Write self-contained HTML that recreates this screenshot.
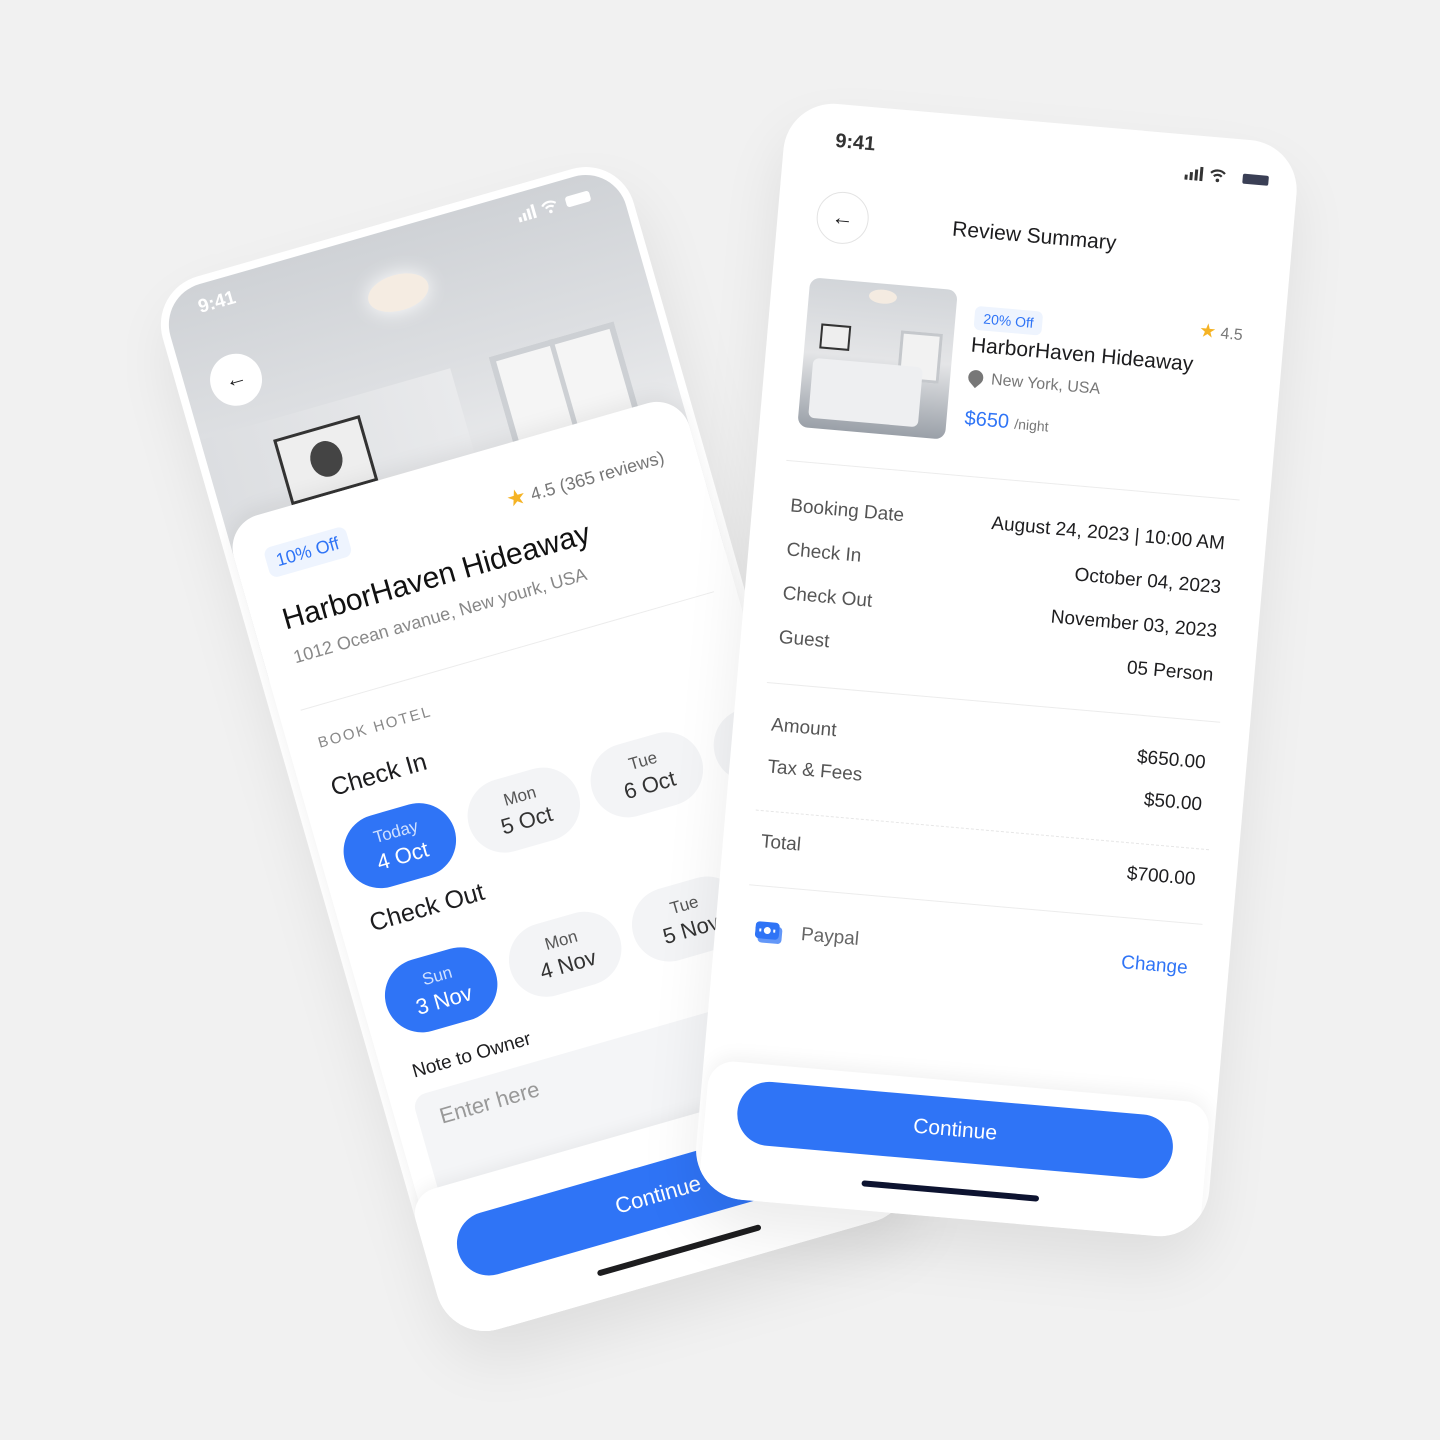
<!DOCTYPE html>
<html><head><meta charset="utf-8"><style>
*{margin:0;padding:0;box-sizing:border-box}
body{width:1440px;height:1440px;background:#f1f1f1;position:relative;overflow:hidden;font-family:"Liberation Sans",sans-serif;color:#1d1d1f}
.ph{position:absolute;background:#fff;border-radius:50px;box-shadow:0 30px 60px rgba(0,0,0,.08)}
.a{position:absolute;white-space:nowrap}
#L{left:287px;top:202px;width:490px;height:1095px;transform-origin:245px 535px;transform:rotate(-16deg);overflow:hidden}
#R{left:740px;top:120px;width:515px;height:1100px;transform-origin:257px 537px;transform:rotate(5deg);overflow:hidden}
.pill{position:absolute;width:114px;height:74px;border-radius:37px;background:#f3f4f6;text-align:center;color:#333}
.pill .d{font-size:17px;color:#555;margin-top:13px}
.pill .n{font-size:22px;margin-top:2px}
.pill.on{background:#2f74f6;color:#fff}
.pill.on .d{color:#cfe0ff}
.lab{font-size:19px;color:#555}
.val{font-size:19px;color:#1d1d1f;text-align:right;right:41px}
.hr{position:absolute;left:30px;right:30px;height:1px;background:#ececec}
</style></head><body>

<div class="ph" id="L">
  <div class="a" style="left:8px;top:8px;right:8px;height:400px;border-radius:42px 42px 0 0;background:linear-gradient(180deg,#cfd2d6 0,#dcdee1 35%,#e8e9eb 60%,#d8dadd 100%);overflow:hidden">
    <div class="a" style="left:0;top:150px;width:260px;height:250px;background:linear-gradient(90deg,#dcdee1,#e9eaec)"></div>
    <div class="a" style="left:200px;top:45px;width:62px;height:36px;border-radius:50%;background:#f5ece2;box-shadow:0 0 20px #fff"></div>
    <div class="a" style="left:300px;top:150px;width:130px;height:170px;background:#f5f5f5;border:6px solid #cdd0d4"></div>
    <div class="a" style="left:362px;top:150px;width:5px;height:170px;background:#cdd0d4"></div>
    <div class="a" style="left:70px;top:170px;width:90px;height:68px;background:#eee;border:3px solid #333"></div>
    <div class="a" style="left:100px;top:185px;width:32px;height:36px;border-radius:50%;background:#444"></div>
    <div class="a" style="left:20px;top:250px;width:220px;height:150px;background:#f3f3f5;border-radius:10px"></div>
    <div class="a" style="left:40px;top:245px;width:170px;height:30px;background:#959ba3;border-radius:10px"></div>
  </div>
  <div class="a" style="left:43px;top:20px;font-size:19px;color:#fff;font-weight:bold">9:41</div>
  <div class="a" style="left:375px;top:22px;color:#fff;font-size:14px">
    <svg width="80" height="16"><rect x="0" y="10" width="3" height="5" fill="#fff"/><rect x="5" y="7" width="3" height="8" fill="#fff"/><rect x="10" y="4" width="3" height="11" fill="#fff"/><rect x="15" y="1" width="3" height="14" fill="#fff"/><path d="M26 6 a10 10 0 0 1 14 0 M29 9 a6 6 0 0 1 8 0" stroke="#fff" stroke-width="2.2" fill="none"/><circle cx="33" cy="13" r="1.8" fill="#fff"/><rect x="50" y="3" width="25" height="11" rx="3" fill="#fff"/></svg>
  </div>
  <div class="a" style="left:33px;top:84px;width:52px;height:52px;border-radius:50%;background:#fff;text-align:center;line-height:50px;font-size:22px">←</div>
  <div class="a" style="left:8px;top:246px;right:8px;bottom:0;background:#fff;border-radius:34px 34px 0 0;box-shadow:0 -6px 20px rgba(0,0,0,.06)"></div>
  <div class="a" style="left:286px;top:288px;font-size:18px;color:#777"><span style="color:#f5b324;font-size:22px">★</span> 4.5 (365 reviews)</div>
  <div class="a" style="left:38px;top:280px;padding:5px 10px;border-radius:8px;background:#eef4fe;color:#2f74f6;font-size:18px">10% Off</div>
  <div class="a" style="left:38px;top:338px;font-size:30px;color:#111">HarborHaven Hideaway</div>
  <div class="a" style="left:38px;top:383px;font-size:18px;color:#888">1012 Ocean avanue, New yourk, USA</div>
  <div class="hr" style="top:445px"></div>
  <div class="a" style="left:38px;top:474px;font-size:15px;letter-spacing:2px;color:#888">BOOK HOTEL</div>
  <div class="a" style="left:38px;top:515px;font-size:25px">Check In</div>
  <div class="pill on" style="left:31px;top:566px"><div class="d">Today</div><div class="n">4 Oct</div></div>
  <div class="pill" style="left:160px;top:566px"><div class="d">Mon</div><div class="n">5 Oct</div></div>
  <div class="pill" style="left:288px;top:566px"><div class="d">Tue</div><div class="n">6 Oct</div></div>
  <div class="pill" style="left:416px;top:566px"><div class="d">Wed</div><div class="n">7 Oct</div></div>
  <div class="a" style="left:38px;top:656px;font-size:25px">Check Out</div>
  <div class="pill on" style="left:31px;top:716px"><div class="d">Sun</div><div class="n">3 Nov</div></div>
  <div class="pill" style="left:160px;top:716px"><div class="d">Mon</div><div class="n">4 Nov</div></div>
  <div class="pill" style="left:288px;top:716px"><div class="d">Tue</div><div class="n">5 Nov</div></div>
  <div class="a" style="left:38px;top:814px;font-size:19px">Note to Owner</div>
  <div class="a" style="left:30px;top:848px;width:430px;height:115px;border-radius:14px;background:#f4f5f7"></div>
  <div class="a" style="left:52px;top:862px;font-size:22px;color:#999">Enter here</div>
  <div class="a" style="left:0;top:942px;right:0;bottom:0;background:#fff;border-radius:26px 26px 0 0;box-shadow:0 -4px 16px rgba(0,0,0,.05)"></div>
  <div class="a" style="left:32px;top:978px;width:416px;height:64px;border-radius:32px;background:#2f74f6;color:#fff;font-size:22px;text-align:center;line-height:64px">Continue</div>
  <div class="a" style="left:160px;top:1066px;width:170px;height:6px;border-radius:3px;background:#1d1d1f"></div>
</div>

<div class="ph" id="R">
  <div class="a" style="left:51px;top:26px;font-size:20px;font-weight:bold;color:#333">9:41</div>
  <div class="a" style="left:402px;top:30px">
    <svg width="90" height="16"><rect x="0" y="10" width="3" height="5" fill="#333"/><rect x="5" y="7" width="3" height="8" fill="#333"/><rect x="10" y="4" width="3" height="11" fill="#333"/><rect x="15" y="1" width="3" height="14" fill="#333"/><path d="M26 6 a10 10 0 0 1 14 0 M29 9 a6 6 0 0 1 8 0" stroke="#333" stroke-width="2.2" fill="none"/><circle cx="33" cy="13" r="1.8" fill="#333"/><rect x="58" y="4" width="26" height="10" rx="2" fill="#3a3f55"/></svg>
  </div>
  <div class="a" style="left:39px;top:87px;width:52px;height:52px;border-radius:50%;border:1px solid #e3e3e3;text-align:center;line-height:50px;font-size:22px">←</div>
  <div class="a" style="left:0;right:0;top:103px;text-align:center;font-size:21px">Review Summary</div>
  <div class="a" style="left:38px;top:175px;width:148px;height:150px;border-radius:10px;overflow:hidden;background:linear-gradient(180deg,#d2d5d9,#e4e5e7 50%,#9aa0a8)">
    <div class="a" style="left:60px;top:6px;width:28px;height:14px;border-radius:50%;background:#f4ebe1"></div>
    <div class="a" style="left:95px;top:45px;width:42px;height:50px;background:#f2f2f2;border:3px solid #c5c8cc"></div>
    <div class="a" style="left:15px;top:45px;width:30px;height:25px;border:2px solid #333;background:#eee"></div>
    <div class="a" style="left:10px;top:80px;width:110px;height:60px;background:#eeeff1;border-radius:6px"></div>
  </div>
  <div class="a" style="left:205px;top:189px;padding:4px 9px;border-radius:6px;background:#eef4fe;color:#2f74f6;font-size:14px">20% Off</div>
  <div class="a" style="left:430px;top:183px;font-size:16px;color:#777"><span style="color:#f5b324;font-size:19px">★</span> 4.5</div>
  <div class="a" style="left:204px;top:217px;font-size:21px">HarborHaven Hideaway</div>
  <div class="a" style="left:204px;top:253px;font-size:16px;color:#777"><span style="display:inline-block;width:15px;height:15px;border-radius:50% 50% 50% 0;transform:rotate(-45deg);background:#777;margin-right:8px;vertical-align:-2px"></span>New York, USA</div>
  <div class="a" style="left:204px;top:291px;font-size:20px;color:#2f74f6">$650 <span style="font-size:14px;color:#777">/night</span></div>
  <div class="hr" style="top:359px"></div>
  <div class="a lab" style="left:38px;top:394px">Booking Date</div>
  <div class="a val" style="top:394px">August 24, 2023 | 10:00 AM</div>
  <div class="a lab" style="left:38px;top:438px">Check In</div>
  <div class="a val" style="top:438px">October 04, 2023</div>
  <div class="a lab" style="left:38px;top:482px">Check Out</div>
  <div class="a val" style="top:482px">November 03, 2023</div>
  <div class="a lab" style="left:38px;top:526px">Guest</div>
  <div class="a val" style="top:526px">05 Person</div>
  <div class="hr" style="top:582px"></div>
  <div class="a lab" style="left:38px;top:614px">Amount</div>
  <div class="a val" style="top:614px">$650.00</div>
  <div class="a lab" style="left:38px;top:656px">Tax &amp; Fees</div>
  <div class="a val" style="top:656px">$50.00</div>
  <div class="hr" style="top:710px;background:none;border-top:1px dashed #e6e6e6"></div>
  <div class="a lab" style="left:38px;top:731px">Total</div>
  <div class="a val" style="top:731px">$700.00</div>
  <div class="hr" style="top:785px"></div>
  <div class="a" style="left:40px;top:820px">
    <svg width="28" height="24"><rect x="3" y="5" width="24" height="17" rx="4" fill="#2f74f6" opacity=".75"/><rect x="0" y="1" width="24" height="17" rx="4" fill="#2f74f6"/><circle cx="12" cy="9.5" r="3.5" fill="#fff"/><rect x="4" y="8" width="2" height="3" fill="#fff"/><rect x="18" y="8" width="2" height="3" fill="#fff"/></svg>
  </div>
  <div class="a lab" style="left:86px;top:820px;color:#666">Paypal</div>
  <div class="a" style="right:41px;top:820px;font-size:19px;color:#2f74f6">Change</div>
  <div class="a" style="left:6px;top:963px;right:6px;bottom:0;background:#fff;border-radius:26px 26px 0 0;box-shadow:0 -6px 18px rgba(0,0,0,.05)"></div>
  <div class="a" style="left:38px;top:980px;width:437px;height:64px;border-radius:32px;background:#2f74f6;color:#fff;font-size:21px;text-align:center;line-height:64px">Continue</div>
  <div class="a" style="left:168px;top:1070px;width:178px;height:6px;border-radius:3px;background:#0d1330"></div>
</div>
</body></html>
